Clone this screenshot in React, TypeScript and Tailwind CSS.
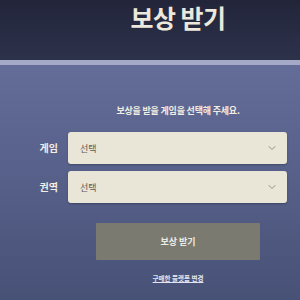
import { ChevronDown } from "lucide-react";

const fields = [
  { label: "게임", value: "선택" },
  { label: "권역", value: "선택" },
];

const font = { fontFamily: '"Noto Sans CJK KR", "Noto Sans", sans-serif' };

export default function App() {
  return (
    <div
      className="w-[300px] h-[300px] overflow-hidden flex flex-col bg-gradient-to-b from-[#6b75a1] via-[#59638d] to-[#485277]"
      style={font}
    >
      {/* Header */}
      <header className="h-[60px] shrink-0 bg-gradient-to-b from-[#22253a] to-[#2d324b] pl-[56px] flex justify-center">
        <h1 className="text-[25px] font-bold text-[#ece8dc] leading-none pt-[5px] tracking-[-0.5px]">
          보상 받기
        </h1>
      </header>
      <div className="h-[5px] shrink-0 bg-[#a3a9c6]" />

      {/* Body */}
      <main className="flex flex-col items-center pl-[56px]">
        <p className="mt-[41px] text-[9px] font-semibold text-[#f1ede2] leading-none tracking-[-0.2px]">
          보상을 받을 게임을 선택해 주세요.
        </p>

        <div className="mt-[17px] flex flex-col gap-[7px] self-start -ml-[20px]">
          {fields.map((f) => (
            <div key={f.label} className="flex items-center gap-[10px]">
              <span className="w-[22px] text-right text-[10px] font-bold text-[#f3efe4] leading-none">
                {f.label}
              </span>
              <div className="w-[219px] h-[32px] rounded-[3px] bg-[#e9e6d7] flex items-center justify-between pl-[12px] pr-[9px] shadow-[0_1px_2px_rgba(0,0,0,0.25)]">
                <span className="text-[9px] text-[#5c5b55] leading-none">{f.value}</span>
                <ChevronDown className="w-[12px] h-[12px] text-[#85847c]" strokeWidth={1.75} />
              </div>
            </div>
          ))}
        </div>

        <button className="mt-[20px] w-[164px] h-[37px] bg-[#7b7a71] text-[#eeece2] text-[9px] font-semibold rounded-[1px] flex items-center justify-center">
          보상 받기
        </button>

        <a className="mt-[15px] text-[6.5px] font-semibold text-[#e1e4f0] underline leading-none">
          구매한 플랫폼 변경
        </a>
      </main>
    </div>
  );
}
